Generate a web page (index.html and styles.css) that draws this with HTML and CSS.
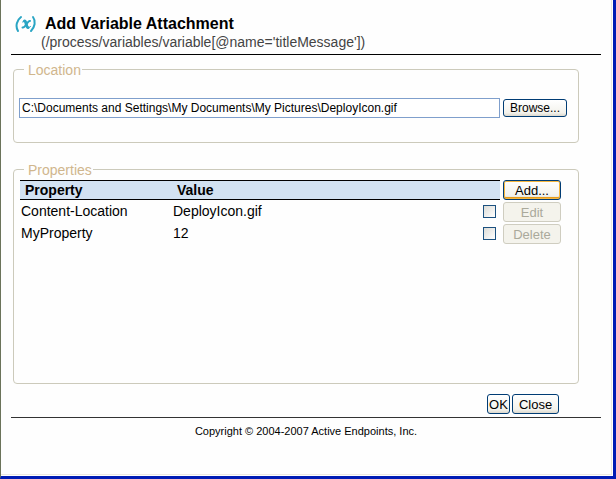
FILE: index.html
```
<!DOCTYPE html>
<html lang="en">
<head>
<meta charset="utf-8">
<title>Add Variable Attachment</title>
<link rel="stylesheet" href="styles.css">
</head>
<body>
<main class="dialog">
  <header class="header">
    <svg class="icon" viewBox="0 0 22 18" aria-hidden="true">
      <g fill="none" stroke="#2aa5c4" stroke-linecap="round">
        <path stroke-width="2" d="M6 2C2 5 0 11 3 16"/>
        <path stroke-width="2" d="M18 2C21 6 20 12 16 16"/>
        <path stroke-width="3" d="M9.500 6C11.500 6 11 12.500 13 12.500"/>
        <path stroke-width="2" d="M15 6C12.500 5 10.500 13.500 7.500 12.500"/>
        <path stroke-width="1" d="M7.500 7L9.500 5.500M13.500 13L15.500 11.500"/>
      </g>
    </svg>
    <div class="heading">
      <h1 class="title">Add Variable Attachment</h1>
      <p class="path">(/process/variables/variable[@name='titleMessage'])</p>
    </div>
  </header>

  <form class="form">
    <fieldset class="group location">
      <legend>Location</legend>
      <div class="row">
        <input class="file" type="text" aria-label="File location" value="C:\Documents and Settings\My Documents\My Pictures\DeployIcon.gif">
        <button class="button browse" type="button">Browse...</button>
      </div>
    </fieldset>

    <fieldset class="group properties">
      <legend>Properties</legend>
      <div class="row">
        <table class="table">
          <thead>
            <tr><th class="name">Property</th><th>Value</th><th class="pick"></th></tr>
          </thead>
          <tbody>
            <tr><td>Content-Location</td><td>DeployIcon.gif</td><td class="pick"><input class="check" type="checkbox" aria-label="Select Content-Location"></td></tr>
            <tr><td>MyProperty</td><td>12</td><td class="pick"><input class="check" type="checkbox" aria-label="Select MyProperty"></td></tr>
          </tbody>
        </table>
        <div class="tools">
          <button class="button add" type="button">Add...</button>
          <button class="button" type="button" disabled>Edit</button>
          <button class="button" type="button" disabled>Delete</button>
        </div>
      </div>
    </fieldset>

    <div class="actions">
      <button class="button ok" type="submit">OK</button>
      <button class="button close" type="button">Close</button>
    </div>
  </form>

  <footer class="footer">Copyright © 2004-2007 Active Endpoints, Inc.</footer>
</main>
</body>
</html>
```
FILE: styles.css
```
* {
  box-sizing: border-box;
}

body {
  margin: 0;
  font-family: "Liberation Sans", Arial, sans-serif;
  color: #000;
  background: #fefefe;
}

.dialog {
  min-height: 100vh;
  padding: 15px 12px 0 10px;
  border-left: 1px solid #6b735a;
  border-right: 3px solid #001cb4;
  border-bottom: 3px solid #001cb4;
  box-shadow: inset -1px -1px #fff, inset -2px -2px #ece9e0;
}

.header {
  display: flex;
  gap: 4px;
  padding: 0 0 3px 4px;
  border-bottom: 1px solid #000;
}

.icon {
  width: 22px;
  height: 18px;
}

.title {
  margin: 0 0 0 4px;
  font-size: 16px;
  line-height: 18px;
}

.path {
  margin: 0;
  font-size: 14px;
  line-height: 18px;
  color: #444;
}

.form {
  margin: 6px 22px 0 2px;
}

.group {
  min-width: 0;
  margin: 0;
  padding: 0 17px 0 5px;
  border: 1px solid #cccabb;
  border-radius: 4px;
}

.group legend {
  margin-left: 5px;
  padding: 1px 1px 0 4px;
  font-size: 14px;
  line-height: 16px;
  color: #d0b68d;
}

.location {
  padding-top: 20px;
  padding-right: 11px;
  padding-bottom: 24px;
}

.properties {
  min-height: 223px;
  margin-top: 18px;
  padding-top: 2px;
}

.row {
  display: flex;
  align-items: flex-start;
  gap: 3px;
}

.file {
  flex: 1;
  min-width: 0;
  height: 20px;
  padding: 0 2px;
  border: 1px solid #7f9fcc;
  font: 12px "Liberation Sans", Arial, sans-serif;
  color: #000;
  background: #fff;
}

.button {
  height: 20px;
  padding: 0;
  border: 1px solid #003c74;
  border-radius: 3px;
  font: 13px "Liberation Sans", Arial, sans-serif;
  color: #000;
  background: linear-gradient(#fff, #f3f2ec 80%, #dcd8cd);
}

.button:disabled {
  border-color: #cfcdc0;
  color: #aaa99b;
  background: #f4f3ec;
}

.browse {
  width: 64px;
  height: 18px;
  margin-top: 1px;
  font-size: 12px;
}

.add {
  box-shadow: inset 0 0 0 1px #f5b63f, inset 0 -2px #e59b1c;
}

.table {
  flex: 1;
  margin-left: 1px;
  border-collapse: separate;
  border-spacing: 0;
  table-layout: fixed;
  font-size: 14px;
}

.table th {
  height: 20px;
  padding: 0 5px;
  border: solid #000;
  border-width: 1px 0;
  text-align: left;
  line-height: 18px;
  background: #d2e2f2;
}

.table td {
  height: 22px;
  padding: 0 1px;
  line-height: 22px;
}

.table .name {
  width: 152px;
}

.table .pick {
  width: 20px;
  padding: 0 3px;
}

.check {
  appearance: none;
  display: block;
  width: 13px;
  height: 13px;
  margin: 0;
  border: 1px solid #1c5180;
  background: linear-gradient(135deg, #dcdcd7, #fff);
}

.tools {
  display: grid;
  flex: 0 0 58px;
  gap: 2px;
}

.actions {
  display: flex;
  justify-content: flex-end;
  gap: 2px;
  margin: 10px 20px 3px 0;
}

.ok {
  width: 23px;
}

.close {
  width: 47px;
}

.footer {
  padding-top: 5px;
  border-top: 1px solid #333;
  text-align: center;
  font-size: 11px;
  line-height: 16px;
}
```
